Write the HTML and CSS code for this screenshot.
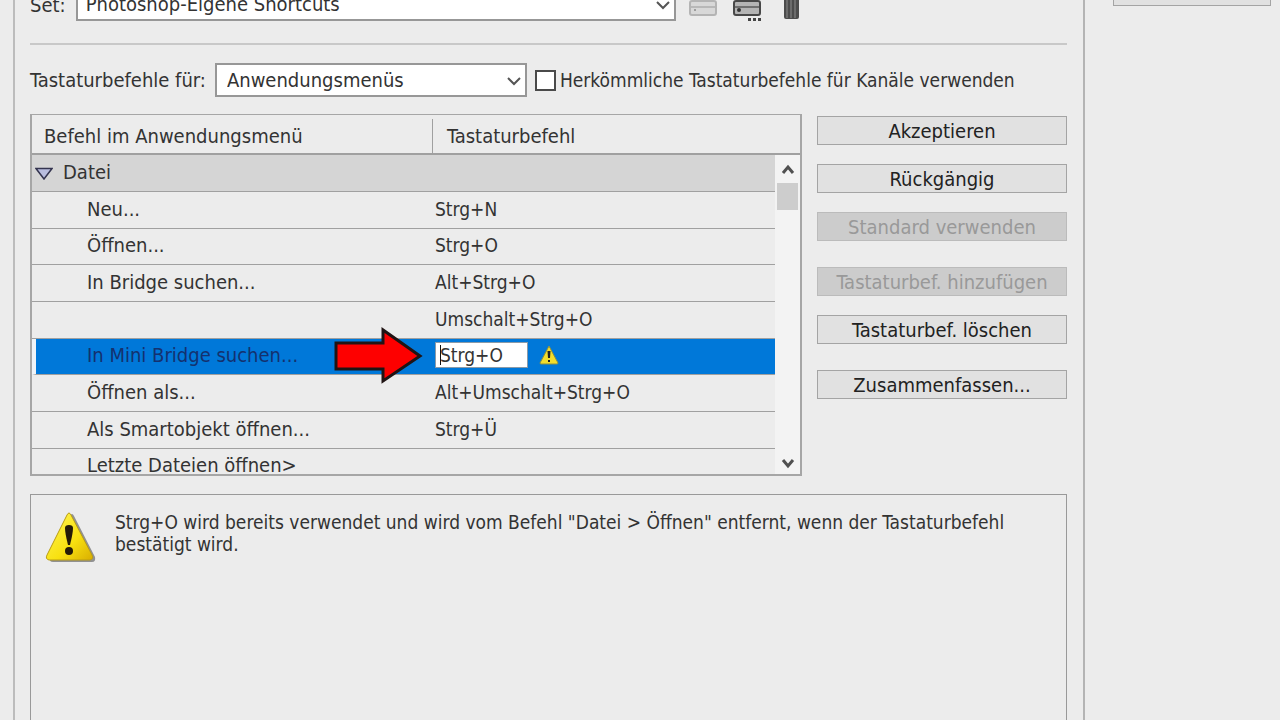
FILE: index.html
```html
<!DOCTYPE html>
<html lang="de">
<head>
  <meta charset="UTF-8">
  <meta name="viewport" content="width=device-width, initial-scale=1">
  <title>Tastaturbefehle</title>
  <link rel="stylesheet" href="styles.css">
</head>
<body>
  <div class="dialog">
    <main class="panel">

      <div class="set-row">
        <label for="set">Set:</label>
        <div class="dropdown set-select">
          <select id="set"><option>Photoshop-Eigene Shortcuts</option></select>
          <svg class="chevron" width="16" height="10" viewBox="0 0 16 10"><path d="M2 2l6 6 6-6"/></svg>
        </div>
        <button class="icon-btn" aria-label="Set speichern" disabled>
          <svg width="28" height="24" viewBox="0 0 28 24"><rect x="1" y="1" width="26" height="14" rx="2" fill="#d8d8d8" stroke="#b4b4b4" stroke-width="2"/><path d="M2 7h24" stroke="#b8b8b8" stroke-width="2"/><circle cx="6" cy="10" r="1" fill="#8a8a8a"/></svg>
        </button>
        <button class="icon-btn" aria-label="Neues Set">
          <svg width="28" height="24" viewBox="0 0 28 24"><rect x="1" y="1" width="26" height="14" rx="2" fill="#b4b4b4" stroke="#484848" stroke-width="2"/><path d="M2 7h24" stroke="#707070" stroke-width="2"/><circle cx="6" cy="10" r="2" fill="#333"/><path d="M15 18h3v3h-3zM20 18h3v3h-3zM25 18h3v3h-3z" fill="#444"/></svg>
        </button>
        <button class="icon-btn" aria-label="Set löschen">
          <svg width="28" height="24" viewBox="0 0 28 24"><path d="M7 0h15v17q0 2-2 2H9q-2 0-2-2z" fill="#4c4c4c"/><path d="M10 0v18M14 0v18M18 0v18" stroke="#8c8c8c" stroke-width="1"/></svg>
        </button>
      </div>

      <hr>

      <div class="filter-row">
        <label for="scope">Tastaturbefehle für:</label>
        <div class="dropdown scope-select">
          <select id="scope"><option>Anwendungsmenüs</option></select>
          <svg class="chevron" width="16" height="10" viewBox="0 0 16 10"><path d="M2 2l6 6 6-6"/></svg>
        </div>
        <input type="checkbox" id="legacy">
        <label for="legacy" class="legacy-label">Herkömmliche Tastaturbefehle für Kanäle verwenden</label>
      </div>

      <div class="content">
        <div class="list">
          <table>
            <colgroup><col class="col-command"><col><col class="col-scroll"></colgroup>
            <thead>
              <tr><th><span>Befehl im Anwendungsmenü</span></th><th colspan="2">Tastaturbefehl</th></tr>
            </thead>
            <tbody>
              <tr class="group">
                <td colspan="2">
                  <svg width="18" height="13" viewBox="0 0 18 13"><path d="M1 1.500h16L9 12z" fill="#b9bdde" stroke="#34344f" stroke-width="1.500"/></svg>Datei
                </td>
                <td class="scroll-cell" rowspan="9">
                  <div class="scrollbar">
                    <svg width="16" height="12" viewBox="0 0 16 12"><path d="M3 9l5-6 5 6"/></svg>
                    <div class="thumb"></div>
                    <svg width="16" height="12" viewBox="0 0 16 12"><path d="M3 3l5 6 5-6"/></svg>
                  </div>
                </td>
              </tr>
              <tr><td>Neu...</td><td>Strg+N</td></tr>
              <tr><td>Öffnen...</td><td>Strg+O</td></tr>
              <tr><td>In Bridge suchen...</td><td>Alt+Strg+O</td></tr>
              <tr><td></td><td>Umschalt+Strg+O</td></tr>
              <tr class="selected">
                <td>In Mini Bridge suchen...
                  <svg class="arrow" width="90" height="60" viewBox="0 0 90 60"><path d="M3 17H50V4L87 30 50 55V43H3z" fill="#fe0000" stroke="#201414" stroke-width="3"/></svg>
                </td>
                <td>
                  <div class="edit">
                    <span class="field"><input type="text" value="Strg+O" aria-label="Tastaturbefehl"></span>
                    <svg width="20" height="20" viewBox="0 0 20 20"><path d="M10 1L19 18Q19 19 18 19H2Q1 19 1 18z" fill="#f3de2c" stroke="#8d9140" stroke-width="1"/><path d="M8.500 6h3l-.5 7H9zM9 15h2v2H9z" fill="#222"/></svg>
                  </div>
                </td>
              </tr>
              <tr><td>Öffnen als...</td><td>Alt+Umschalt+Strg+O</td></tr>
              <tr><td>Als Smartobjekt öffnen...</td><td>Strg+Ü</td></tr>
              <tr><td>Letzte Dateien öffnen&gt;</td><td></td></tr>
            </tbody>
          </table>
        </div>

        <div class="actions">
          <div class="action-group">
            <button>Akzeptieren</button>
            <button>Rückgängig</button>
            <button disabled>Standard verwenden</button>
          </div>
          <div class="action-group">
            <button disabled>Tastaturbef. hinzufügen</button>
            <button>Tastaturbef. löschen</button>
          </div>
          <div class="action-group">
            <button>Zusammenfassen...</button>
          </div>
        </div>
      </div>

      <section class="message">
        <svg width="52" height="52" viewBox="0 0 52 52">
          <defs>
            <linearGradient id="warn" x1="0" y1="0" x2="1" y2="1">
              <stop offset="0" stop-color="#fff65a"/>
              <stop offset=".6" stop-color="#f8e010"/>
              <stop offset="1" stop-color="#d9ae00"/>
            </linearGradient>
          </defs>
          <path d="M25 5Q27 1 29 5L50 46Q51 51 47 51H8Q4 51 5 47z" fill="#555" opacity=".6"/>
          <path d="M22 4Q24 0 26 4L47 44Q49 48 45 49H4Q0 48 2 44z" fill="url(#warn)" stroke="#b99c14" stroke-width="1"/>
          <path d="M20 17Q20 14 24 14T28 17Q28 22 25 34H23Q20 22 20 17z" fill="#241a08"/>
          <circle cx="24" cy="40" r="4" fill="#241a08"/>
        </svg>
        <p>Strg+O wird bereits verwendet und wird vom Befehl "Datei &gt; Öffnen" entfernt, wenn der Tastaturbefehl bestätigt wird.</p>
      </section>
    </main>

    <aside class="side">
      <button aria-label="Abbrechen"></button>
    </aside>
  </div>
</body>
</html>
```
FILE: styles.css
```css
* {
  box-sizing: border-box;
}

body {
  margin: 0;
  background: #ececec;
  color: #333;
  font-family: "DejaVu Sans Condensed", "Noto Sans", sans-serif;
  font-size: 20px;
  line-height: 22px;
}

button,
input,
select {
  font: inherit;
  color: inherit;
}

.dialog {
  display: grid;
  grid-template-columns: 1fr 195px;
  height: 100vh;
  overflow: hidden;
  padding-left: 13px;
}

.panel {
  display: flex;
  flex-direction: column;
  min-width: 0;
  padding: 0 16px 0 15px;
  border-left: 2px solid #bcbcbc;
  border-right: 2px solid #b4b4b4;
}

/* top row is scrolled half out of view */
.set-row {
  display: flex;
  align-items: flex-end;
  gap: 10px;
  height: 21px;
}

.set-row label {
  padding-bottom: 5px;
}

.dropdown {
  position: relative;
}

.dropdown select {
  display: block;
  width: 100%;
  height: 34px;
  padding: 0 30px 0 10px;
  border: 2px solid #979797;
  border-radius: 0;
  background: #fff;
  appearance: none;
}

.chevron {
  position: absolute;
  right: 5px;
  top: 13px;
  fill: none;
  stroke: #555;
  stroke-width: 2;
}

.set-select {
  width: 600px;
}

.set-select select {
  padding-left: 8px;
}

.icon-btn {
  height: 24px;
  padding: 0;
  margin: 0 3px;
  border: none;
  background: none;
  transform: none;
  margin-bottom: -3px;
}

.icon-btn svg {
  display: block;
}

hr {
  width: 100%;
  margin: 22px 0 18px;
  border: none;
  border-top: 2px solid #c8c8c8;
}

.filter-row {
  display: flex;
  align-items: center;
  height: 34px;
}

.filter-row label {
  white-space: nowrap;
}

.filter-row .legacy-label {
  font-size: 19px;
}

.scope-select {
  width: 312px;
  margin: 0 8px 0 9px;
}

input[type="checkbox"] {
  width: 21px;
  height: 21px;
  margin: 0 4px 0 0;
  border: 2px solid #4a4a4a;
  background: #fff;
  appearance: none;
}

.content {
  display: grid;
  grid-template-columns: 1fr 250px;
  gap: 15px;
  margin-top: 17px;
}

.list {
  height: 362px;
  overflow: hidden;
  border: 2px solid #a6a6a6;
  border-top-width: 1px;
}

table {
  width: 100%;
  table-layout: fixed;
  border-spacing: 0;
}

.col-command {
  width: 401px;
}

.col-scroll {
  width: 25px;
}

th {
  height: 40px;
  padding: 4px 0 0 14px;
  border-bottom: 2px solid #a0a0a0;
  font-weight: normal;
  text-align: left;
}

th:first-child {
  padding-left: 12px;
}

th span {
  display: block;
  height: 34px;
  padding-top: 6px;
  border-right: 1px solid #a0a0a0;
}

td {
  height: 37px;
  padding: 0 0 3px 2px;
  border-bottom: 1px solid #a0a0a0;
  font-size: 19px;
  white-space: nowrap;
}

tr:nth-child(3n) td {
  height: 36px;
}

td:first-child {
  padding-left: 55px;
  font-size: 20px;
}

.group td {
  height: 37px;
  background: #d5d5d5;
}

.group td:first-child {
  padding-left: 3px;
}

.group svg {
  margin-right: 10px;
  vertical-align: -1px;
}

.group .scroll-cell {
  padding: 0;
  background: #f3f3f3;
  vertical-align: top;
}

.scrollbar {
  display: flex;
  flex-direction: column;
  align-items: center;
  height: 320px;
  padding: 9px 0 6px;
}

.scrollbar svg {
  margin: 0;
  fill: none;
  stroke: #505050;
  stroke-width: 3;
}

.thumb {
  width: 21px;
  height: 27px;
  margin: 7px 0 auto;
  background: #cdcdcd;
}

.selected td {
  background: #0078d9;
  color: #14316f;
}

.selected td:first-child {
  position: relative;
  padding-left: 51px;
  border-left: 4px solid #f0f4f8;
}

.arrow {
  position: absolute;
  right: 10px;
  top: -13px;
}

.edit {
  display: flex;
  align-items: center;
  gap: 11px;
}

.field {
  position: relative;
}

.field input {
  display: block;
  width: 93px;
  height: 26px;
  padding: 0 0 0 4px;
  border: 1px solid #8a9aa8;
  background: #fff;
  color: #333;
}

/* text caret */
.field::before {
  content: "";
  position: absolute;
  left: 5px;
  top: 3px;
  width: 1px;
  height: 20px;
  background: #111;
}

.actions {
  display: flex;
  flex-direction: column;
  gap: 26px;
  padding-top: 2px;
}

.action-group {
  display: flex;
  flex-direction: column;
  gap: 19px;
}

.action-group button,
.side button {
  height: 29px;
  padding: 0;
  border: 1px solid #a4a4a4;
  background: #e1e1e1;
  color: #222;
}

.action-group button:disabled {
  border-color: #bbb;
  background: #cccccc;
  color: #999;
}

.message {
  display: flex;
  flex: 1;
  align-items: flex-start;
  gap: 18px;
  margin-top: 18px;
  padding: 16px 20px 0 14px;
  border: 1px solid #999;
  border-bottom: none;
  font-size: 19px;
}

.message svg {
  flex: none;
}

.message p {
  margin: 0;
}

.side {
  display: flex;
  align-items: flex-end;
  height: 6px;
  padding: 0 9px 0 28px;
}

.side button {
  flex: 1;
}
```
